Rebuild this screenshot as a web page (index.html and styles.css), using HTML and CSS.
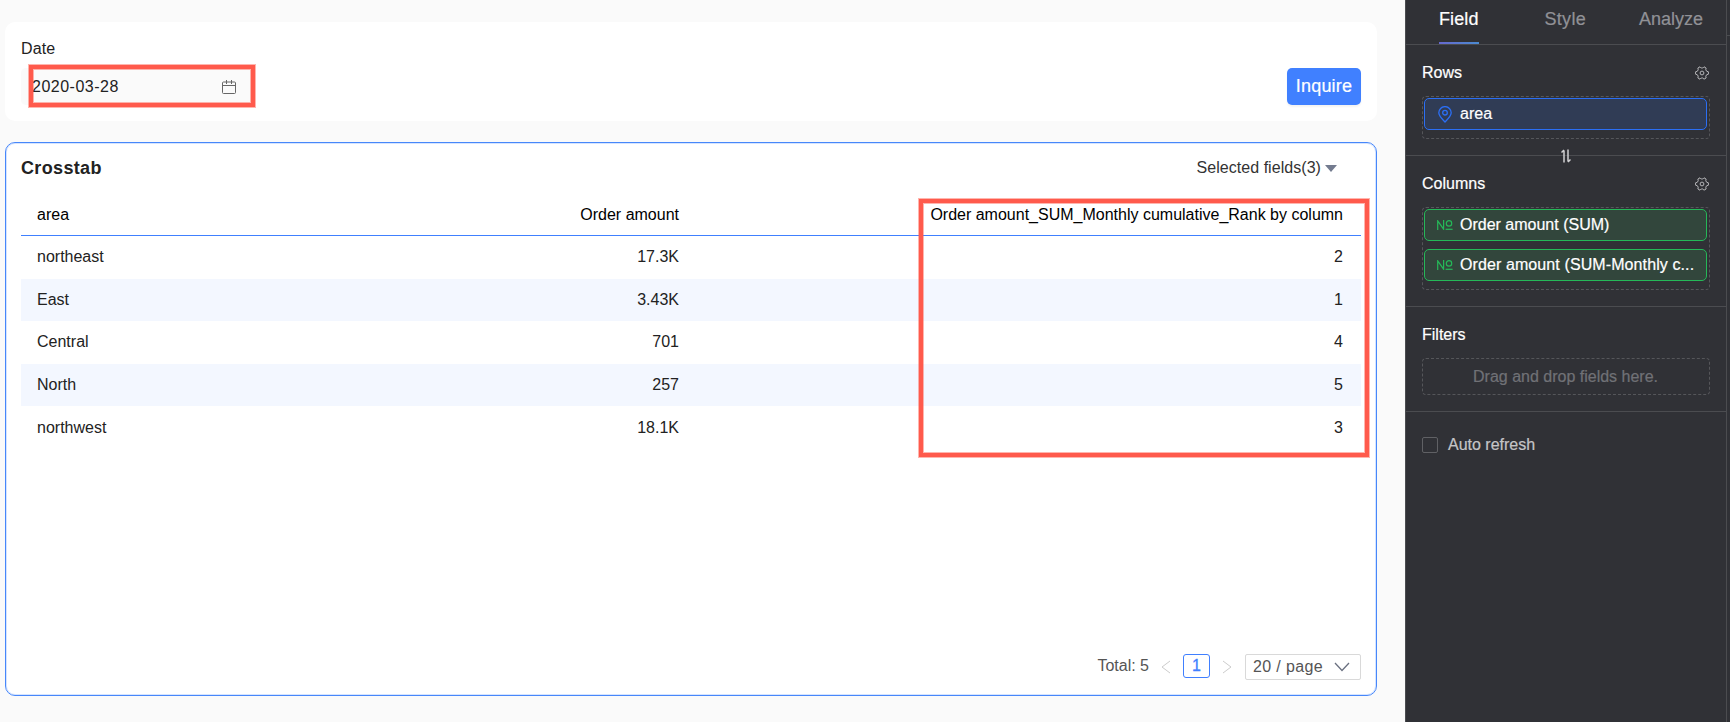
FILE: index.html
```html
<!DOCTYPE html>
<html lang="en">
<head>
    <meta charset="utf-8">
    <meta name="viewport" content="width=device-width, initial-scale=1.0">
    <title>Crosstab</title>
    <link rel="stylesheet" href="styles.css">
</head>
<body>
    <main class="canvas">
        <section class="query-card">
            <div class="query-field">
                <label class="query-label">Date</label>
                <div class="date-input">
                    <span class="date-value">2020-03-28</span>
                    <svg class="icon-calendar" width="14" height="14" viewBox="0 0 14 14">
                        <rect x="0.5" y="2" width="13" height="11.5" rx="1"/>
                        <path d="M0.5 5.5h13M4.5 0v4M9.5 0v4"/>
                    </svg>
                    <div class="highlight highlight-date"></div>
                </div>
            </div>
            <button class="btn-inquire">Inquire</button>
        </section>

        <section class="table-card">
            <header class="card-header">
                <h1 class="card-title">Crosstab</h1>
                <div class="field-select">Selected fields(3)<span class="caret"></span></div>
            </header>

            <div class="table-wrap">
                <table class="crosstab">
                    <thead>
                        <tr><th class="col-area">area</th><th class="col-amount">Order amount</th><th>Order amount_SUM_Monthly cumulative_Rank by column</th></tr>
                    </thead>
                    <tbody>
                        <tr><td>northeast</td><td>17.3K</td><td>2</td></tr>
                        <tr><td>East</td><td>3.43K</td><td>1</td></tr>
                        <tr><td>Central</td><td>701</td><td>4</td></tr>
                        <tr><td>North</td><td>257</td><td>5</td></tr>
                        <tr><td>northwest</td><td>18.1K</td><td>3</td></tr>
                    </tbody>
                </table>
                <div class="highlight highlight-rank"></div>
            </div>

            <footer class="pagination">
                <span class="total">Total: 5</span>
                <svg class="arrow" width="10" height="14" viewBox="0 0 10 14"><path d="M9 1L1 7l8 6"/></svg>
                <span class="page-current">1</span>
                <svg class="arrow next" width="10" height="14" viewBox="0 0 10 14"><path d="M1 1l8 6-8 6"/></svg>
                <div class="page-size">
                    <span>20 / page</span>
                    <svg width="16" height="10" viewBox="0 0 16 10"><path d="M1 1l7 7.5L15 1"/></svg>
                </div>
            </footer>
        </section>
    </main>

    <aside class="panel">
        <nav class="tabs">
            <span class="tab active">Field</span>
            <span class="tab tab-style">Style</span>
            <span class="tab">Analyze</span>
        </nav>

        <section class="group group-rows">
            <div class="group-head">
                <h2>Rows</h2>
                <svg class="icon-gear" width="14" height="14" viewBox="0 0 14 14">
                    <path d="M5 .8L6.2 2H7.8L9 .8L11.1 2L10.8 3.8L11.6 5.2L13.4 5.8V8.2L11.6 8.8L10.8 10.2L11.1 12L9 13.2L7.8 12H6.2L5 13.2L2.9 12L3.2 10.2L2.4 8.8L.6 8.2V5.8L2.4 5.2L3.2 3.8L2.9 2Z"/>
                    <circle cx="7" cy="7" r="1.9"/>
                </svg>
            </div>
            <div class="dropzone">
                <div class="pill dimension">
                    <svg class="icon-pin" width="14" height="17" viewBox="0 0 14 17">
                        <path d="M7 16C4 13 0.8 10 0.8 6.8a6.2 6.2 0 0 1 12.4 0C13.2 10 10 13 7 16Z"/>
                        <circle cx="7" cy="6.7" r="2.3"/>
                    </svg>
                    <span>area</span>
                </div>
            </div>
            <svg class="icon-swap" width="10" height="14" viewBox="0 0 10 14">
                <path d="M3 13.5V1.5M0.5 3.5L3 1M7 0.5v12M9.5 10.5L7 13"/>
            </svg>
        </section>

        <section class="group group-columns">
            <div class="group-head">
                <h2>Columns</h2>
                <svg class="icon-gear" width="14" height="14" viewBox="0 0 14 14">
                    <path d="M5 .8L6.2 2H7.8L9 .8L11.1 2L10.8 3.8L11.6 5.2L13.4 5.8V8.2L11.6 8.8L10.8 10.2L11.1 12L9 13.2L7.8 12H6.2L5 13.2L2.9 12L3.2 10.2L2.4 8.8L.6 8.2V5.8L2.4 5.2L3.2 3.8L2.9 2Z"/>
                    <circle cx="7" cy="7" r="1.9"/>
                </svg>
            </div>
            <div class="dropzone">
                <div class="pill measure">
                    <svg class="icon-number" width="16" height="10" viewBox="0 0 16 10">
                        <path d="M0.7 10V0.8L6.6 9.2V0"/>
                        <circle cx="12" cy="3.4" r="2.7"/>
                        <path d="M8.6 9.3h7"/>
                    </svg>
                    <span>Order amount (SUM)</span>
                </div>
                <div class="pill measure">
                    <svg class="icon-number" width="16" height="10" viewBox="0 0 16 10">
                        <path d="M0.7 10V0.8L6.6 9.2V0"/>
                        <circle cx="12" cy="3.4" r="2.7"/>
                        <path d="M8.6 9.3h7"/>
                    </svg>
                    <span class="pill-long">Order amount (SUM-Monthly c...</span>
                </div>
            </div>
        </section>

        <section class="group group-filters">
            <div class="group-head"><h2>Filters</h2></div>
            <div class="dropzone empty">Drag and drop fields here.</div>
        </section>

        <label class="refresh"><span class="checkbox"></span>Auto refresh</label>
    </aside>
    <div class="rail"><div class="rail-head"></div></div>
</body>
</html>
```
FILE: styles.css
```css
:root {
    --blue: #4080ff;
    --red: #ff5a4c;
    --red-soft: rgba(255, 90, 76, 0.45);
    --green: #25b858;
    --panel: #303136;
    --line: #4b4c50;
}

* {
    margin: 0;
    padding: 0;
    box-sizing: border-box;
}

body {
    display: flex;
    height: 722px;
    overflow: hidden;
    background: #fafafa;
    color: #222;
    font: 16px/20px "Liberation Sans", Arial, sans-serif;
}

svg {
    flex: none;
    fill: none;
    stroke: currentColor;
}

/* Report canvas */
.canvas {
    flex: none;
    width: 1405px;
    padding: 22px 28px 0 5px;
}

.query-card {
    display: flex;
    justify-content: space-between;
    align-items: flex-end;
    height: 99px;
    padding: 16px;
    background: #fff;
    border-radius: 10px;
}

.query-label {
    display: block;
    margin-bottom: 9px;
    letter-spacing: 0.1px;
}

.date-input {
    position: relative;
    display: flex;
    justify-content: space-between;
    align-items: center;
    width: 231px;
    height: 37px;
    padding: 0 16px 0 11px;
    background: #fafafa;
    border-radius: 5px;
}

.date-value {
    letter-spacing: 0.5px;
}

.icon-calendar {
    color: #666;
}

.highlight {
    position: absolute;
    border: 4px solid var(--red);
    box-shadow: 0 0 0 1px var(--red-soft), inset 0 0 0 1px var(--red-soft);
}

.highlight-date {
    left: 8px;
    top: -3px;
    width: 226px;
    height: 42px;
}

.btn-inquire {
    width: 74px;
    height: 37px;
    border: 0;
    border-radius: 5px;
    background: var(--blue);
    color: #fff;
    font: 18px "Liberation Sans", Arial, sans-serif;
    letter-spacing: 0.2px;
    -webkit-text-stroke: 0.2px;
    box-shadow: 0 2px 2px rgba(0, 0, 0, 0.05);
}

.table-card {
    display: flex;
    flex-direction: column;
    height: 554px;
    margin-top: 21px;
    padding: 15px;
    background: #fff;
    border: 1px solid #4787fa;
    border-radius: 10px;
    box-shadow: inset 0 0 0 1px #d5e4ff;
}

.card-header {
    display: flex;
    justify-content: space-between;
    padding-right: 24px;
    color: #333;
}

.card-title {
    font-size: 18px;
    line-height: 20px;
    color: #222;
    letter-spacing: 0.35px;
}

.field-select {
    display: flex;
    align-items: center;
    letter-spacing: 0.05px;
}

.caret {
    margin-left: 4px;
    border: 6px solid transparent;
    border-top: 7px solid #737b8f;
    border-bottom: 0;
}

.table-wrap {
    position: relative;
    margin-top: 17px;
}

.crosstab {
    width: 1340px;
    table-layout: fixed;
    border-collapse: separate;
    border-spacing: 0;
}

.crosstab th {
    height: 41px;
    padding: 0 18px 0 16px;
    border-bottom: 1px solid var(--blue);
    color: #000;
    font-weight: 400;
    text-align: right;
    white-space: nowrap;
}

.crosstab td {
    height: 42.6px;
    padding: 0 18px 0 16px;
    text-align: right;
}

.crosstab th:first-child,
.crosstab td:first-child {
    text-align: left;
}

.crosstab .col-area {
    width: 335px;
}

.crosstab .col-amount {
    width: 341px;
}

.crosstab tbody tr:nth-child(even) {
    background: #f3f7ff;
}

.highlight-rank {
    left: 898px;
    top: 4px;
    width: 450px;
    height: 258px;
}

.pagination {
    display: flex;
    align-items: flex-start;
    justify-content: flex-end;
    height: 26px;
    margin-top: auto;
    color: #555;
}

.total {
    line-height: 24px;
}

.arrow {
    margin: 6px 12px 0;
    color: #ccc;
}

.arrow.next {
    margin-right: 13px;
}

.page-current {
    width: 27px;
    height: 24px;
    border: 1px solid var(--blue);
    border-radius: 3px;
    color: var(--blue);
    line-height: 22px;
    text-align: center;
    -webkit-text-stroke: 0.3px;
}

.page-size {
    display: flex;
    align-items: center;
    justify-content: space-between;
    width: 116px;
    height: 26px;
    padding: 0 10px 0 7px;
    border: 1px solid #d9d9d9;
    border-radius: 2px;
    letter-spacing: 0.35px;
}

.page-size svg {
    color: #6a7080;
    stroke-width: 1.3;
}

/* Settings panel */
.panel {
    flex: none;
    width: 322px;
    background: var(--panel);
    border: solid var(--line);
    border-width: 0 1px;
    color: #fff;
    -webkit-text-stroke: 0.2px;
}

.tabs {
    display: flex;
    height: 45px;
    padding-left: 33px;
    border-bottom: 1px solid var(--line);
    color: #919196;
    font-size: 18px;
}

.tab {
    padding-top: 9px;
}

.tab.active {
    border-bottom: 2px solid;
    border-image: linear-gradient(90deg, #6768ce, #4a8bd1) 1;
    color: #fff;
    letter-spacing: 0.1px;
}

.tab-style {
    margin: 0 53px 0 66px;
    letter-spacing: 0.3px;
}

.group {
    position: relative;
    padding: 18px 16px 0;
    border-bottom: 1px solid var(--line);
}

.group-rows {
    height: 111px;
}

.group-columns {
    height: 151px;
}

.group-filters {
    height: 105px;
}

.group-head {
    display: flex;
    justify-content: space-between;
    align-items: center;
    height: 20px;
    padding-right: 1px;
}

.group-head h2 {
    font-size: 16px;
    font-weight: 400;
}

.icon-gear {
    color: #b5b5b8;
}

.dropzone {
    display: flex;
    flex-direction: column;
    gap: 8px;
    height: 43px;
    margin-top: 13px;
    padding: 1px 2px 1px 1px;
    border: 1px dashed #55565a;
    border-radius: 4px;
}

.group-columns .dropzone {
    height: 83px;
}

.dropzone.empty {
    align-items: center;
    justify-content: center;
    height: 37px;
    color: #707176;
}

.pill {
    display: flex;
    align-items: center;
    flex: none;
    height: 32px;
    padding-left: 13px;
    border: 1px solid;
    border-radius: 5px;
    white-space: nowrap;
}

.pill span {
    color: #fff;
}

.pill-long {
    letter-spacing: 0.1px;
}

.dimension {
    background: #303c55;
    border-color: #2b6ff5;
    color: #2b6ff5;
}

.measure {
    background: #32463c;
    border-color: var(--green);
    color: var(--green);
}

.icon-pin {
    margin-right: 8px;
    stroke-width: 1.3;
}

.icon-number {
    margin-right: 7px;
    margin-left: -1px;
    stroke-width: 1.2;
}

.icon-swap {
    position: absolute;
    left: 155px;
    bottom: -8px;
    color: #d0d0d2;
    stroke-width: 1.5;
}

.refresh {
    display: flex;
    align-items: center;
    gap: 10px;
    padding: 23px 16px;
    color: #c5c5c7;
}

.checkbox {
    width: 16px;
    height: 16px;
    border: 1px solid #606165;
    border-radius: 2px;
}

.rail {
    flex: 1;
    background: var(--panel);
}

.rail-head {
    height: 36px;
    border-bottom: 1px solid var(--line);
}
```
